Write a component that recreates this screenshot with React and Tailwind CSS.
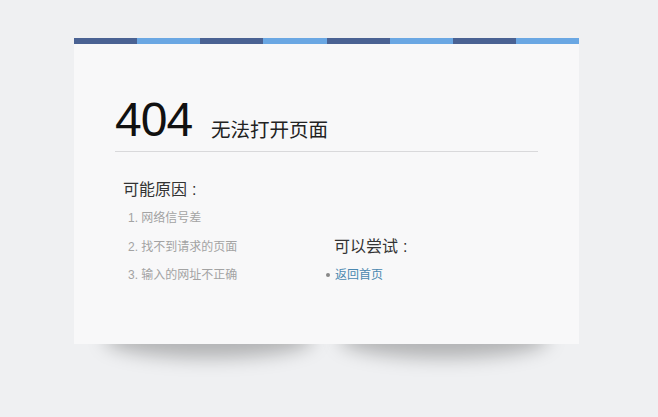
import React from "react";

const stripe = ["#4a6293", "#6aa7e3", "#4a6293", "#6aa7e3", "#4a6293", "#6aa7e3", "#4a6293", "#6aa7e3"];

const reasons = ["1. 网络信号差", "2. 找不到请求的页面", "3. 输入的网址不正确"];

export default function App() {
  return (
    <div
      className="w-[658px] h-[417px] bg-[#eff0f2] pt-[38px] pl-[74px] overflow-hidden"
      style={{ fontFamily: '"Liberation Sans", "Noto Sans CJK SC", sans-serif' }}
    >
      <div className="relative w-[505px]">
        {/* lifted shadows */}
        <div className="absolute left-[30px] top-[282px] w-[210px] h-[38px] rounded-[50%] bg-black/25 blur-[9px]" />
        <div className="absolute right-[30px] top-[282px] w-[210px] h-[38px] rounded-[50%] bg-black/25 blur-[9px]" />

        <div className="relative h-[306px] bg-[#f8f8f9]">
          <div className="flex h-[6px]">
            {stripe.map((c, i) => (
              <div key={i} className="flex-1" style={{ backgroundColor: c }} />
            ))}
          </div>

          <div className="px-[41px] pt-[51px]">
            <div className="flex items-end border-b border-[#d9d9db] pb-[7px]">
              <span className="text-[48px] leading-[49px] tracking-[-1px] text-[#111]">404</span>
              <span className="ml-[19px] mb-[2px] text-[19.5px] leading-[24px] text-[#222]">无法打开页面</span>
            </div>

            <div className="flex items-end pl-[8px] mt-[28px]">
              <div className="w-[203px]">
                <div className="text-[16px] leading-[20px] text-[#333]">
                  可能原因<span className="ml-[5px]">:</span>
                </div>
                <ul className="mt-[4px] pl-[5px] text-[12px] leading-[28.5px] text-[#a3a3a3]">
                  {reasons.map((r) => (
                    <li key={r}>{r}</li>
                  ))}
                </ul>
              </div>
              <div>
                <div className="ml-[8px] text-[16px] leading-[20px] text-[#333]">
                  可以尝试<span className="ml-[5px]">:</span>
                </div>
                <div className="flex items-center mt-[4px] h-[28.5px]">
                  <span className="w-[4px] h-[4px] rounded-full bg-[#888]" />
                  <a href="#" className="ml-[5px] text-[12px] text-[#4a88b0]">返回首页</a>
                </div>
              </div>
            </div>
          </div>
        </div>
      </div>
    </div>
  );
}
